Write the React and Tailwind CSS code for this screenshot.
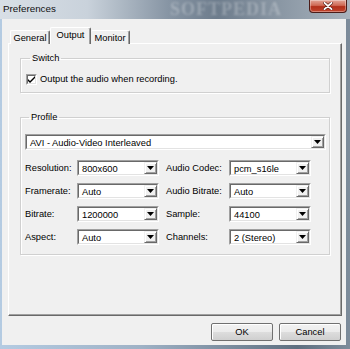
import React from "react";

const font = { fontFamily: '"Liberation Sans", Arial, sans-serif' };

function Arrow() {
  return (
    <svg width="7" height="4" viewBox="0 0 7 4" className="block">
      <path d="M0 0h7L3.5 4z" fill="#000" />
    </svg>
  );
}

function Combo({ value, w = "w-[82px]" }) {
  return (
    <div className={`${w} h-[16px] flex border border-t-[#a0a0a0] border-l-[#a0a0a0] border-b-white border-r-white`}>
      <div className="flex-1 flex border border-t-[#696969] border-l-[#696969] border-b-[#e3e3e3] border-r-[#e3e3e3] bg-white">
        <div className="flex-1 pl-[3px] text-[9.3px] leading-[12px] text-black pt-[1px] whitespace-nowrap overflow-hidden">{value}</div>
        <div className="w-[13px] h-full flex items-center justify-center bg-[#f0f0f0] border border-t-[#f0f0f0] border-l-[#f0f0f0] border-b-[#696969] border-r-[#696969] shadow-[inset_1px_1px_0_#fff,inset_-1px_-1px_0_#a0a0a0]">
          <Arrow />
        </div>
      </div>
    </div>
  );
}

function Row({ l1, v1, l2, v2 }) {
  return (
    <div className="flex items-center h-[16px]">
      <div className="w-[52px] text-[9.3px] leading-[12px] whitespace-nowrap">{l1}</div>
      <Combo value={v1} />
      <div className="w-[63px] ml-[7px] text-[9.3px] leading-[12px] whitespace-nowrap">{l2}</div>
      <Combo value={v2} />
    </div>
  );
}

function Group({ title, children, className = "" }) {
  return (
    <fieldset className={`border border-[#d0d0d0] shadow-[inset_1px_1px_0_#fff,1px_1px_0_#fff] ${className}`}>
      <legend className="ml-[4px] px-[2px] text-[9.3px] leading-[11px]">{title}</legend>
      {children}
    </fieldset>
  );
}

export default function App() {
  return (
    <div
      className="w-[350px] h-[349px] overflow-hidden relative bg-[linear-gradient(90deg,#b4cbe2_0%,#9fb2c6_40%,#5e6f80_85%,#7d8c9b_100%)] text-black"
      style={font}
    >
      {/* Title bar */}
      <div className="h-[19px] flex items-start relative bg-[linear-gradient(90deg,#d8dfe6_0%,#c9d2db_25%,#8795a4_48%,#6d7c8c_62%,#8a97a4_80%,#a9b3bd_100%)]">
        <div className="pl-[3px] pt-[3px] text-[9.8px] leading-[11px] text-[#111]">Preferences</div>
        <div className="absolute left-[170px] top-[0px] text-[18px] leading-[18px] font-bold tracking-[1px] text-white/25 blur-[1px] whitespace-nowrap" style={{ fontFamily: '"Liberation Serif", serif' }}>
          SOFTPEDIA
        </div>
        <div className="ml-auto mr-[3px] w-[38px] h-[13px] rounded-b-[4px] border border-t-0 border-[#4b1c18] bg-[linear-gradient(180deg,#e2a597_0%,#cf6a55_45%,#b2301a_55%,#c2452e_100%)] flex items-center justify-center relative shadow-[inset_0_0_0_1px_rgba(255,255,255,0.35)]">
          <svg width="10" height="8" viewBox="0 0 10 8">
            <path d="M1.5 0.8L8.5 7.2M8.5 0.8L1.5 7.2" stroke="#5a2018" strokeWidth="3" strokeLinecap="round" />
            <path d="M1.5 0.8L8.5 7.2M8.5 0.8L1.5 7.2" stroke="#fff" strokeWidth="1.8" strokeLinecap="round" />
          </svg>
        </div>
      </div>

      {/* Client */}
      <div className="ml-[2px] w-[344px] h-[326px] bg-[#f0f0f0] flex flex-col">
        <div className="ml-[6px] mt-[8px] w-[334px] flex flex-col">
          {/* Tabs */}
          <div className="h-[16px] flex items-end pl-[2px] relative z-10">
            <div className="w-[40px] h-[14px] mb-[-1px] bg-[#f0f0f0] border-t border-l border-white border-r border-r-[#696969] rounded-t-[2px] text-[9.3px] leading-[12px] flex items-center justify-center shadow-[inset_-1px_0_0_#a0a0a0]">
              General
            </div>
            <div className="w-[41px] h-[17px] mb-[-1px] bg-[#f0f0f0] border-t border-l border-white border-r border-r-[#696969] rounded-t-[2px] text-[9.3px] leading-[12px] flex items-center justify-center pb-[2px] shadow-[inset_-1px_0_0_#a0a0a0]">
              Output
            </div>
            <div className="w-[39px] h-[14px] mb-[-1px] bg-[#f0f0f0] border-t border-white border-r border-r-[#696969] rounded-t-[2px] text-[9.3px] leading-[12px] flex items-center justify-center shadow-[inset_-1px_0_0_#a0a0a0]">
              Monitor
            </div>
          </div>
          {/* Panel */}
          <div className="h-[273px] border border-t-white border-l-white border-r-[#696969] border-b-[#696969] shadow-[inset_-1px_-1px_0_#a0a0a0] px-[11px] pt-[9px]">
            <Group title="Switch" className="pl-[5px] pb-[7px]">
              <div className="flex items-center mt-[9px] h-[12px]">
                <div className="w-[11px] h-[11px] border border-t-[#a0a0a0] border-l-[#a0a0a0] border-b-white border-r-white">
                  <div className="w-full h-full bg-white border border-t-[#696969] border-l-[#696969] border-b-[#e3e3e3] border-r-[#e3e3e3] flex items-center justify-center">
                    <svg width="7" height="7" viewBox="0 0 7 7" className="block">
                      <path d="M0 3l2 2 5-5v2L2 7 0 5z" fill="#000" />
                    </svg>
                  </div>
                </div>
                <div className="ml-[3px] text-[9.3px] leading-[12px] whitespace-nowrap">Output the audio when recording.</div>
              </div>
            </Group>
            <Group title="Profile" className="mt-[19px] pl-[4px] pr-[3px] pb-[9px]">
              <div className="mt-[11px]">
                <Combo value="AVI - Audio-Video Interleaved" w="w-full" />
              </div>
              <div className="mt-[10px] flex flex-col gap-[7px]">
                <Row l1="Resolution:" v1="800x600" l2="Audio Codec:" v2="pcm_s16le" />
                <Row l1="Framerate:" v1="Auto" l2="Audio Bitrate:" v2="Auto" />
                <Row l1="Bitrate:" v1="1200000" l2="Sample:" v2="44100" />
                <Row l1="Aspect:" v1="Auto" l2="Channels:" v2="2 (Stereo)" />
              </div>
            </Group>
          </div>
        </div>
        {/* Buttons */}
        <div className="mt-[7px] flex justify-end gap-[6px] pr-[5px]">
          <button className="w-[62px] h-[18px] border border-[#707070] rounded-[2px] bg-[linear-gradient(180deg,#f2f2f2_0%,#ebebeb_50%,#dddddd_51%,#cfcfcf_100%)] shadow-[inset_1px_1px_0_#fff] text-[9.3px] leading-[12px]">
            OK
          </button>
          <button className="w-[62px] h-[18px] border border-[#707070] rounded-[2px] bg-[linear-gradient(180deg,#f2f2f2_0%,#ebebeb_50%,#dddddd_51%,#cfcfcf_100%)] shadow-[inset_1px_1px_0_#fff] text-[9.3px] leading-[12px]">
            Cancel
          </button>
        </div>
      </div>
    </div>
  );
}
